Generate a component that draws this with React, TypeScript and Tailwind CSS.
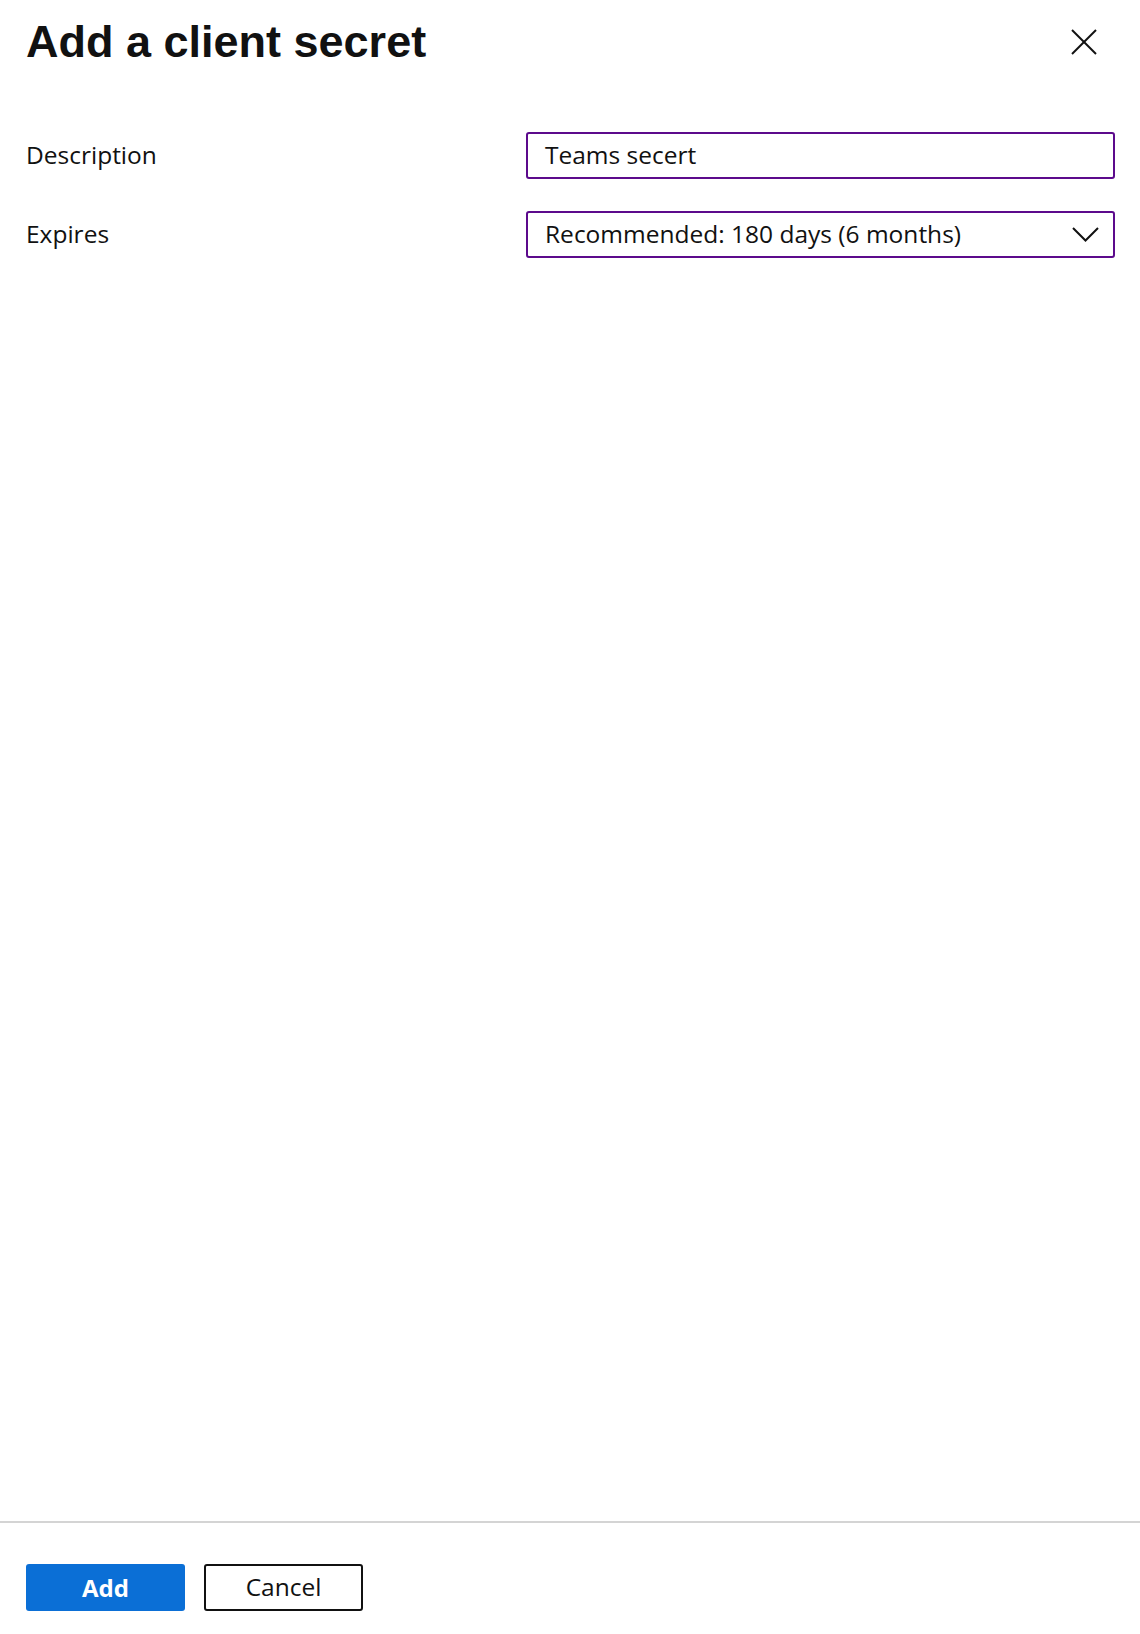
import React from 'react';

const CloseIcon = () => (
  <svg width="26" height="26" viewBox="0 0 26 26" fill="none" stroke="#111" strokeWidth="2">
    <line x1="1" y1="1" x2="25" y2="25" />
    <line x1="25" y1="1" x2="1" y2="25" />
  </svg>
);

const Chevron = () => (
  <svg width="27" height="15" viewBox="0 0 27 15" fill="none" stroke="#111" strokeWidth="2">
    <polyline points="1,1 13.5,13.5 26,1" />
  </svg>
);

const App: React.FC = () => {
  return (
    <div className="w-[1140px] h-[1634px] bg-white flex flex-col font-['Open_Sans',sans-serif] text-[#111]">
      {/* Header */}
      <div className="flex justify-between items-start pl-[26px] pr-[43px] pt-[19px]">
        <h1 className="font-['Liberation_Sans',Arial,sans-serif] font-bold text-[45px] leading-none">
          Add a client secret
        </h1>
        <button className="mt-[10px]" aria-label="Close">
          <CloseIcon />
        </button>
      </div>

      {/* Form */}
      <div className="flex flex-col gap-[32px] mt-[68px] pl-[26px] pr-[25px]">
        <div className="flex items-center">
          <label className="w-[500px] text-[24.5px]">Description</label>
          <div className="w-[589px] h-[47px] border-2 border-[#5c0a8c] rounded-[3px] px-[17px] flex items-center text-[24.5px]">
            Teams secert
          </div>
        </div>
        <div className="flex items-center">
          <label className="w-[500px] text-[24.5px]">Expires</label>
          <div className="w-[589px] h-[47px] border-2 border-[#5c0a8c] rounded-[3px] pl-[17px] pr-[14px] flex items-center justify-between text-[24.5px]">
            <span>Recommended: 180 days (6 months)</span>
            <Chevron />
          </div>
        </div>
      </div>

      <div className="flex-1" />

      {/* Footer */}
      <div className="border-t-2 border-[#d4d4d4] pt-[41px] pb-[23px] pl-[26px] flex gap-[19px]">
        <button className="w-[159px] h-[47px] bg-[#0b6fd6] rounded-[3px] text-white font-bold text-[24px] leading-none">
          Add
        </button>
        <button className="w-[159px] h-[47px] border-2 border-[#111] rounded-[3px] text-[24.5px] leading-none">
          Cancel
        </button>
      </div>
    </div>
  );
};

export default App;
